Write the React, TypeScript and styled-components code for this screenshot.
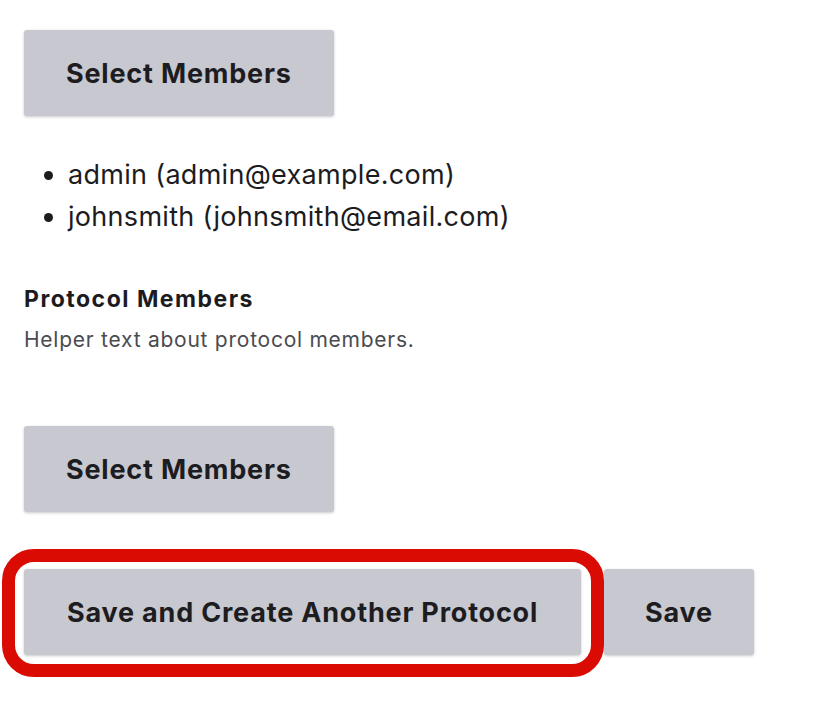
import React from "react";
import styled, { createGlobalStyle } from "styled-components";

const Global = createGlobalStyle`
  html, body { margin: 0; padding: 0; background: #ffffff; }
  body { font-family: Inter, "Noto Sans", "Liberation Sans", sans-serif; color: #1c1c1f; }
`;

const Page = styled.div`
  min-height: 726px;
  box-sizing: border-box;
  padding: 30px 0 60px 24px;
  display: flex;
  flex-direction: column;
  align-items: flex-start;
`;

const Button = styled.button<{ $pad?: number }>`
  height: 86px;
  padding: 0 ${(p) => p.$pad ?? 43}px;
  border: none;
  border-radius: 3px;
  background: #c8c8d0;
  box-shadow: 0 1px 3px rgba(0, 0, 0, 0.22);
  font-family: Inter, "Noto Sans", "Liberation Sans", sans-serif;
  font-size: 27px;
  font-weight: 700;
  letter-spacing: 0.8px;
  color: #1d1d21;
  cursor: pointer;
`;

const MemberList = styled.ul`
  margin: 38px 0 0 0;
  padding: 0 0 0 44px;
  font-size: 27px;
  letter-spacing: 0.3px;
  line-height: 42px;
  color: #1c1c1f;
`;

const Item = styled.li``;

const Field = styled.div`
  margin-top: 46px;
  display: flex;
  flex-direction: column;
  gap: 13px;
`;

const Label = styled.div`
  font-size: 23px;
  font-weight: 700;
  letter-spacing: 1.5px;
  color: #1c1c1f;
  line-height: 30px;
`;

const Helper = styled.div`
  font-size: 21px;
  letter-spacing: 0.75px;
  color: #4b4b50;
  line-height: 26px;
`;

const SecondButtonWrap = styled.div`
  margin-top: 73px;
`;

const Actions = styled.div`
  margin-top: 57px;
  display: flex;
  gap: 23px;
`;

const Highlight = styled.div`
  position: relative;
  &::after {
    content: "";
    position: absolute;
    left: -22px;
    top: -20px;
    right: -23px;
    bottom: -22px;
    border: 13px solid #d90b03;
    border-radius: 32px;
    pointer-events: none;
  }
`;

export default function App() {
  return (
    <>
      <Global />
      <Page>
        <Button $pad={42}>Select Members</Button>
        <MemberList>
          <Item>admin (admin@example.com)</Item>
          <Item>johnsmith (johnsmith@email.com)</Item>
        </MemberList>
        <Field>
          <Label>Protocol Members</Label>
          <Helper>Helper text about protocol members.</Helper>
        </Field>
        <SecondButtonWrap>
          <Button $pad={42}>Select Members</Button>
        </SecondButtonWrap>
        <Actions>
          <Highlight>
            <Button>Save and Create Another Protocol</Button>
          </Highlight>
          <Button $pad={41}>Save</Button>
        </Actions>
      </Page>
    </>
  );
}
